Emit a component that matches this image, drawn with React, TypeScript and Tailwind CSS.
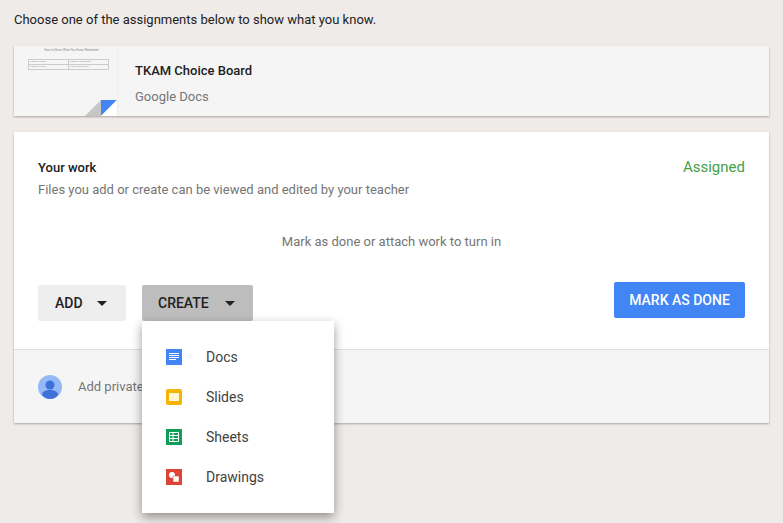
import { ChevronDown } from "lucide-react";

const menuItems = [
  {
    label: "Docs",
    icon: (
      <svg width="16" height="16" viewBox="0 0 16 16">
        <rect width="16" height="16" fill="#4285f4" />
        <path d="M3 4.5h10M3 6.5h10M3 8.5h10M3 10.5h7" stroke="#fff" strokeWidth="1" />
      </svg>
    ),
  },
  {
    label: "Slides",
    icon: (
      <svg width="16" height="16" viewBox="0 0 16 16">
        <rect width="16" height="16" rx="2" fill="#f4b400" />
        <rect x="3" y="4" width="10" height="8" fill="#fff6d8" />
      </svg>
    ),
  },
  {
    label: "Sheets",
    icon: (
      <svg width="16" height="16" viewBox="0 0 16 16">
        <rect width="16" height="16" fill="#0f9d58" />
        <path d="M3.5 3.5h9v9h-9zM3.5 6.5h9M3.5 9.5h9M7 3.5v9" fill="none" stroke="#fff" strokeWidth="1" />
      </svg>
    ),
  },
  {
    label: "Drawings",
    icon: (
      <svg width="16" height="16" viewBox="0 0 16 16">
        <rect width="16" height="16" fill="#db4437" />
        <circle cx="6" cy="6" r="3" fill="#fff" />
        <rect x="7" y="7" width="6" height="6" fill="#fff" stroke="#db4437" strokeWidth="0.5" />
      </svg>
    ),
  },
];

function Caret() {
  return (
    <svg width="10" height="5" viewBox="0 0 10 5" className="shrink-0">
      <path d="M0 0h10L5 5z" fill="#212121" />
    </svg>
  );
}

function Thumbnail() {
  return (
    <div className="relative h-[70px] w-[104px] shrink-0 overflow-hidden bg-[#f5f5f5] border-r border-[#eeeeee]">
      <div className="flex flex-col items-center pt-[2px]">
        <div className="text-[3px] leading-[5px] text-[#888] ml-[12px]">How to Show What You Know Worksheet</div>
        <div className="mt-[6px] ml-[6px] w-[81px] border border-[#ccc] text-[2.5px] leading-[4px] text-[#999]">
          <div className="grid grid-cols-2 border-b border-[#ccc]">
            <div className="border-r border-[#ccc] pl-[1px]">Make an Essay</div>
            <div className="pl-[1px]">Create a Slideshow</div>
          </div>
          <div className="grid grid-cols-2">
            <div className="border-r border-[#ccc] pl-[1px]">Create a Video</div>
            <div className="pl-[1px]">Write a Blog Post</div>
          </div>
        </div>
      </div>
      <svg width="32" height="16" viewBox="0 0 32 16" className="absolute right-0 bottom-0">
        <path d="M0 16L16 0v16z" fill="#c6c6c6" />
        <path d="M16 0h16L16 16z" fill="#4285f4" />
        <path d="M32 0v16H16z" fill="#fff" />
      </svg>
    </div>
  );
}

export default function App() {
  return (
    <div className="h-[523px] w-[783px] overflow-hidden bg-[#efebe9] px-[14px] font-['Roboto',sans-serif] text-[#212121]">
      <p className="pt-[10px] text-[13px] leading-[19px]">Choose one of the assignments below to show what you know.</p>

      <div className="mt-[17px] flex h-[70px] bg-[#f5f5f5] shadow-[0_1px_2px_rgba(0,0,0,0.3)]">
        <Thumbnail />
        <div className="pl-[17px] pt-[15px]">
          <div className="text-[13px] font-medium leading-[20px]">TKAM Choice Board</div>
          <div className="mt-[6px] text-[13px] leading-[20px] text-[#757575]">Google Docs</div>
        </div>
      </div>

      <div className="mt-[16px] h-[291px] bg-white shadow-[0_1px_2px_rgba(0,0,0,0.3)]">
        <div className="h-[218px] border-b border-[#e0e0e0] px-[24px]">
          <div className="flex justify-between pt-[26px]">
            <div>
              <div className="text-[13px] font-medium leading-[20px]">Your work</div>
              <div className="mt-[2px] text-[13px] leading-[20px] text-[#757575]">
                Files you add or create can be viewed and edited by your teacher
              </div>
            </div>
            <div className="-mt-[3px] text-[15px] leading-[24px] text-[#43a047]">Assigned</div>
          </div>
          <div className="mt-[32px] text-center text-[13px] leading-[20px] text-[#757575]">
            Mark as done or attach work to turn in
          </div>
          <div className="mt-[33px] flex items-start">
            <button className="flex h-[36px] w-[88px] items-center rounded-[2px] bg-[#eeeeee] pl-[17px] text-[14px] font-medium">
              ADD
              <span className="ml-[14px]"><Caret /></span>
            </button>
            <div className="relative ml-[16px]">
              <button className="flex h-[36px] w-[111px] items-center rounded-[2px] bg-[#bdbdbd] pl-[16px] text-[14px] font-medium">
                CREATE
                <span className="ml-[16px]"><Caret /></span>
              </button>
              <div className="absolute left-0 top-[36px] z-10 h-[192px] w-[192px] bg-white py-[16px] shadow-[0_4px_10px_rgba(0,0,0,0.4)]">
                {menuItems.map((item) => (
                  <div key={item.label} className="flex h-[40px] items-center pl-[24px]">
                    {item.icon}
                    <span className="ml-[24px] text-[14px] text-[#424242]">{item.label}</span>
                  </div>
                ))}
              </div>
            </div>
            <button className="ml-auto -mt-[3px] h-[36px] w-[131px] rounded-[2px] bg-[#4285f4] text-[14px] font-medium text-white">
              MARK AS DONE
            </button>
          </div>
        </div>
        <div className="flex h-[73px] items-center bg-[#f5f5f5] px-[24px]">
          <svg width="24" height="24" viewBox="0 0 24 24">
            <circle cx="12" cy="12" r="12" fill="#94b9f6" />
            <circle cx="12" cy="10" r="4.5" fill="#3f72d8" />
            <path d="M4 20c0-3.5 3.5-5 8-5s8 1.5 8 5c-2 2.500-5 4-8 4s-6-1.500-8-4z" fill="#3f72d8" />
          </svg>
          <span className="ml-[16px] text-[13px] text-[#757575]">Add private comment...</span>
        </div>
      </div>
    </div>
  );
}
